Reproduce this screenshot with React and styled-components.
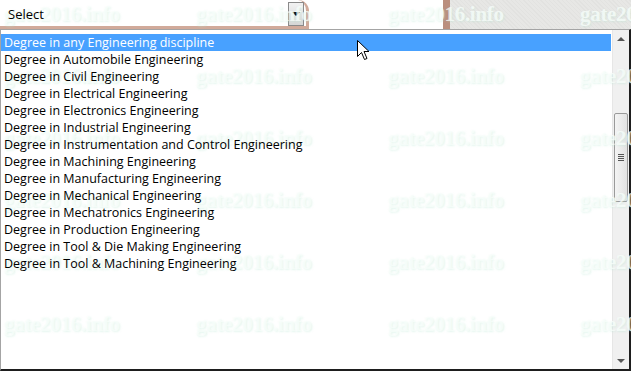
import React from 'react';
import styled, { createGlobalStyle } from 'styled-components';

const Global = createGlobalStyle`
  html, body { margin: 0; padding: 0; background: #fff; }
  body { width: 631px; height: 371px; overflow: hidden; }
`;

const options = [
  'Degree in any Engineering discipline',
  'Degree in Automobile Engineering',
  'Degree in Civil Engineering',
  'Degree in Electrical Engineering',
  'Degree in Electronics Engineering',
  'Degree in Industrial Engineering',
  'Degree in Instrumentation and Control Engineering',
  'Degree in Machining Engineering',
  'Degree in Manufacturing Engineering',
  'Degree in Mechanical Engineering',
  'Degree in Mechatronics Engineering',
  'Degree in Production Engineering',
  'Degree in Tool & Die Making Engineering',
  'Degree in Tool & Machining Engineering',
];

const Page = styled.div`
  position: relative;
  width: 631px;
  height: 371px;
  overflow: hidden;
  font-family: "Open Sans", "Noto Sans", sans-serif;
  font-size: 12.5px;
  color: #000;
`;

const TopBar = styled.div`
  display: flex;
  height: 29px;
`;

const SelectBox = styled.div`
  box-sizing: border-box;
  width: 309px;
  height: 29px;
  display: flex;
  align-items: center;
  justify-content: space-between;
  padding: 1px 2px 0 8px;
  font-size: 13px;
  background: #fff;
  border-right: 3px solid #d1aa9a;
  border-bottom: 3px solid #d1aa9a;
  border-top-right-radius: 11px;
`;

const SelectLabel = styled.span`
  position: relative;
  z-index: 1;
`;

const ArrowButton = styled.div`
  box-sizing: border-box;
  width: 16px;
  height: 24px;
  display: flex;
  align-items: center;
  justify-content: center;
  border: 1px solid #8a8a8a;
  background: linear-gradient(#f2f2f2, #d6d6d6);
  &::after {
    content: '';
    border-left: 4px solid transparent;
    border-right: 4px solid transparent;
    border-top: 4px solid #000;
  }
`;

const Gap = styled.div`
  width: 134px;
  background: #fff;
`;

const Strip = styled.div`
  width: 7px;
  background: #ba8f7e;
`;

const Textured = styled.div`
  flex: 1;
  background:
    repeating-linear-gradient(45deg, rgba(0,0,0,0.025) 0 1px, transparent 1px 3px),
    #e7e7e5;
`;

const ListBox = styled.div`
  box-sizing: border-box;
  display: flex;
  height: 342px;
  border-top: 1px solid #a4a4a4;
  border-left: 1px solid #a4a4a4;
  border-right: 2px solid #1e1e1e;
  border-bottom: 2px solid #1e1e1e;
  background: #fff;
`;

const Options = styled.div`
  position: relative;
  z-index: 1;
  flex: 1;
  padding-top: 4px;
`;

const Option = styled.div`
  height: 17px;
  line-height: 17px;
  padding-left: 3px;
  margin-right: 1px;
  white-space: nowrap;
  background: ${p => (p.$active ? '#48a1ff' : 'transparent')};
  color: ${p => (p.$active ? '#fff' : '#000')};
`;

const Scrollbar = styled.div`
  width: 16px;
  display: flex;
  flex-direction: column;
  align-items: center;
  background: #f0f0f0;
  border-left: 1px solid #e6e6e6;
`;

const ScrollArrow = styled.div`
  height: 17px;
  display: flex;
  align-items: center;
  justify-content: center;
  &::after {
    content: '';
    border-left: 4px solid transparent;
    border-right: 4px solid transparent;
    ${p => (p.$up ? 'border-bottom: 4px solid #555;' : 'border-top: 4px solid #555;')}
  }
`;

const Track = styled.div`
  flex: 1;
  width: 100%;
  padding-top: 66px;
  box-sizing: border-box;
  display: flex;
  justify-content: center;
`;

const Thumb = styled.div`
  box-sizing: border-box;
  width: 14px;
  height: 89px;
  border: 1px solid #9a9a9a;
  border-radius: 2px;
  background: linear-gradient(90deg, #f4f4f4, #e2e2e2);
  display: flex;
  flex-direction: column;
  align-items: center;
  justify-content: center;
  gap: 1px;
`;

const Grip = styled.span`
  width: 6px;
  height: 1px;
  background: #555;
`;

const Watermarks = styled.div`
  position: absolute;
  inset: 0;
  pointer-events: none;
  overflow: hidden;
  display: grid;
  grid-template-columns: repeat(4, 192px);
  grid-auto-rows: 62px;
  padding: 2px 0 0 4px;
`;

const Mark = styled.span`
  font-family: "Liberation Serif", "DejaVu Serif", serif;
  font-weight: bold;
  font-size: 21px;
  letter-spacing: -0.3px;
  color: rgba(248, 254, 251, 0.75);
  text-shadow: 1px 1px 2px rgba(180, 230, 210, 0.35);
  white-space: nowrap;
`;

const Cursor = styled.svg`
  position: absolute;
  z-index: 2;
  left: 357px;
  top: 40px;
`;

export default function App() {
  return (
    <Page>
      <Global />
      <TopBar>
        <SelectBox>
          <SelectLabel>Select</SelectLabel>
          <ArrowButton />
        </SelectBox>
        <Gap />
        <Strip />
        <Textured />
      </TopBar>
      <ListBox>
        <Options>
          {options.map((o, i) => (
            <Option key={o} $active={i === 0}>{o}</Option>
          ))}
        </Options>
        <Scrollbar>
          <ScrollArrow $up />
          <Track>
            <Thumb>
              <Grip /><Grip /><Grip /><Grip />
            </Thumb>
          </Track>
          <ScrollArrow />
        </Scrollbar>
      </ListBox>
      <Watermarks>
        {Array.from({ length: 24 }).map((_, i) => (
          <Mark key={i}>gate2016.info</Mark>
        ))}
      </Watermarks>
      <Cursor width="13" height="21" viewBox="0 0 13 21">
        <path d="M0.5 0.5 L0.5 16.5 L4.5 12.5 L7.5 19.5 L10 18.5 L7 11.5 L12 11.5 Z" fill="#fff" stroke="#000" strokeWidth="1" />
      </Cursor>
    </Page>
  );
}
